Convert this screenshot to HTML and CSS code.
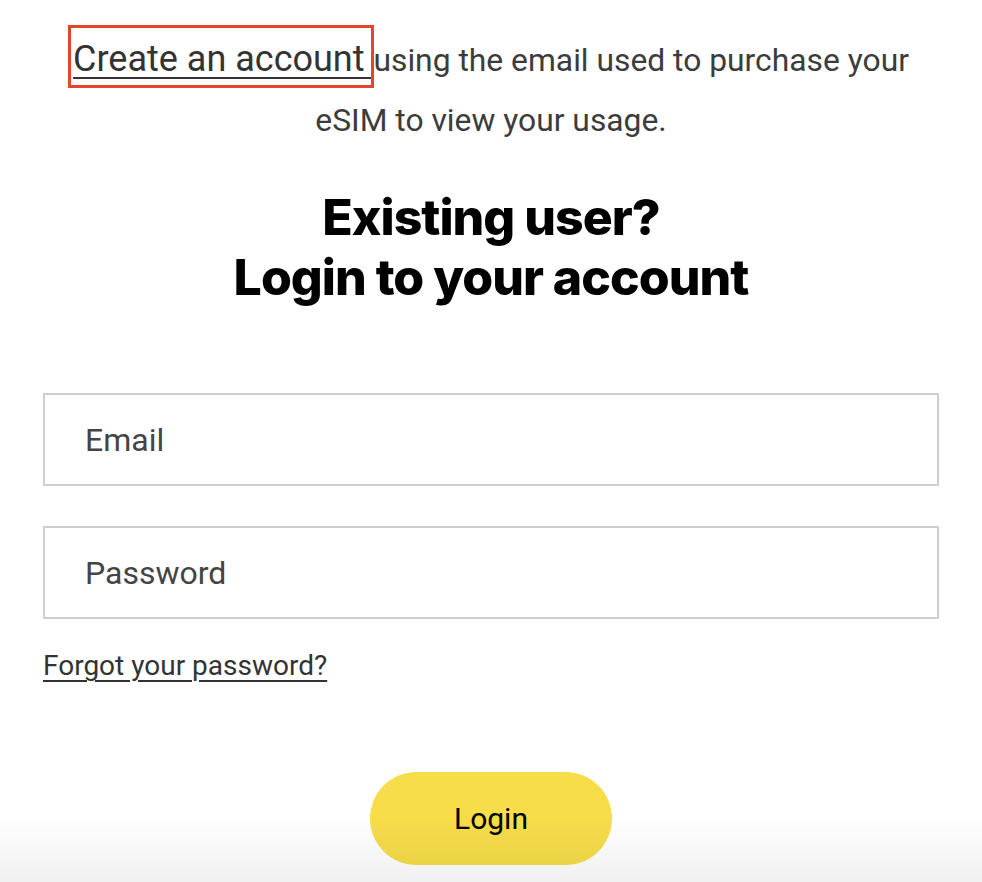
FILE: index.html
```html
<!DOCTYPE html>
<html lang="en">
<head>
<meta charset="utf-8">
<title>Login</title>
<link rel="stylesheet" href="styles.css">
</head>
<body>
<main class="page">
  <p class="intro"><a class="create-link" href="#"><span class="create-text">Create an account </span></a>using the email used to purchase your eSIM to view your usage.</p>
  <h1 class="heading">Existing user?<br>Login to your account</h1>
  <form class="login-form">
    <input class="field" type="email" placeholder="Email">
    <input class="field" type="password" placeholder="Password">
    <a class="forgot" href="#">Forgot your password?</a>
    <div class="actions">
      <button class="login-btn" type="button">Login</button>
    </div>
  </form>
</main>
<div class="fade"></div>
</body>
</html>
```
FILE: styles.css
```css
html, body {
  margin: 0;
  padding: 0;
  background: #fff;
}
body {
  font-family: Roboto, "Liberation Sans", sans-serif;
  color: #3a3a3a;
}
.page {
  width: 896px;
  margin: 0 auto;
  padding-top: 28px;
}
.intro {
  margin: 0;
  text-align: center;
  font-size: 31.8px;
  line-height: 60px;
  color: #3c3c3c;
}
.create-link {
  position: relative;
  display: inline-block;
  line-height: normal;
  font-size: 36px;
  padding: 10px 0 5px 0;
  color: #333;
  text-decoration: none;
}
.create-link::after {
  content: "";
  position: absolute;
  left: -5px;
  right: -1px;
  top: -3px;
  bottom: -3px;
  border: 3px solid #e5462b;
  pointer-events: none;
}
.create-text {
  white-space: pre;
  text-decoration: underline;
  text-decoration-thickness: 2px;
  text-underline-offset: 6px;
}
.heading {
  margin: 37px 0 0;
  text-align: center;
  font-family: Inter, "Liberation Sans", sans-serif;
  font-weight: 800;
  font-size: 50px;
  line-height: 60px;
  letter-spacing: -1px;
  color: #000;
}
.login-form {
  display: flex;
  flex-direction: column;
  margin-top: 86px;
}
.field {
  box-sizing: border-box;
  width: 100%;
  height: 93px;
  border: 2px solid #cfcfcf;
  border-radius: 0;
  padding: 0 40px;
  font-family: Roboto, "Liberation Sans", sans-serif;
  font-size: 32px;
  color: #333;
  margin: 0 0 40px;
  outline: none;
}
.field::placeholder {
  color: #444;
}
.forgot {
  align-self: flex-start;
  margin-top: -10px;
  font-size: 28px;
  line-height: 34px;
  color: #333;
  text-decoration: underline;
  text-decoration-thickness: 2px;
  text-underline-offset: 5px;
}
.actions {
  display: flex;
  justify-content: center;
  margin-top: 89px;
}
.login-btn {
  width: 242px;
  height: 93px;
  border: none;
  border-radius: 47px;
  background: #f7dd4a;
  font-family: Roboto, "Liberation Sans", sans-serif;
  font-size: 30px;
  color: #000;
}
.fade {
  position: fixed;
  left: 0;
  right: 0;
  bottom: 0;
  height: 66px;
  pointer-events: none;
  background: linear-gradient(to bottom, rgba(0,0,0,0), rgba(0,0,0,0.06));
}
```
